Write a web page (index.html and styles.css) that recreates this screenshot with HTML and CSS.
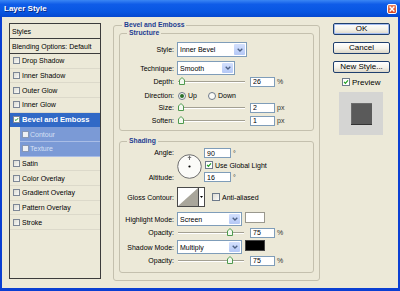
FILE: index.html
```html
<!DOCTYPE html>
<html lang="en">
<head>
    <meta charset="UTF-8">
    <meta name="viewport" content="width=device-width, initial-scale=1.0">
    <title>Layer Style</title>
    <link rel="stylesheet" href="styles.css">
</head>
<body>

<div class="window">
    <div class="titlebar">
        <span class="title">Layer Style</span>
        <span class="close"><svg width="6" height="6" viewBox="0 0 6 6"><path d="M0.6 0.6 L5.4 5.4 M5.4 0.6 L0.6 5.4" stroke="#fff" stroke-width="1.4"/></svg></span>
    </div>

    <div class="content">
        <ul class="styles">
            <li class="head">Styles</li>
            <li class="head">Blending Options: Default</li>
            <li><span class="cb"></span>Drop Shadow</li>
            <li><span class="cb"></span>Inner Shadow</li>
            <li><span class="cb"></span>Outer Glow</li>
            <li><span class="cb"></span>Inner Glow</li>
            <li class="selected"><span class="cb on"><svg viewBox="0 0 7 7"><path d="M1.2 3.4 L2.8 5 L5.8 1.6" stroke="#21a121" stroke-width="1.4" fill="none"/></svg></span>Bevel and Emboss</li>
            <li class="sub"><span class="cb"></span>Contour</li>
            <li class="sub"><span class="cb"></span>Texture</li>
            <li><span class="cb"></span>Satin</li>
            <li><span class="cb"></span>Color Overlay</li>
            <li><span class="cb"></span>Gradient Overlay</li>
            <li><span class="cb"></span>Pattern Overlay</li>
            <li><span class="cb"></span>Stroke</li>
        </ul>

        <fieldset class="group effect">
            <legend>Bevel and Emboss</legend>

            <fieldset class="group structure">
                <legend>Structure</legend>
                <div class="row r-style">
                    <label>Style:</label>
                    <div class="combo w-style"><span>Inner Bevel</span><span class="drop"><svg width="6" height="4" viewBox="0 0 6 4"><path d="M0.7 0.7 L3 3 L5.3 0.7" stroke="#4d6185" stroke-width="1.3" fill="none"/></svg></span></div>
                </div>
                <div class="row r-tech">
                    <label>Technique:</label>
                    <div class="combo w-tech"><span>Smooth</span><span class="drop"><svg width="6" height="4" viewBox="0 0 6 4"><path d="M0.7 0.7 L3 3 L5.3 0.7" stroke="#4d6185" stroke-width="1.3" fill="none"/></svg></span></div>
                </div>
                <div class="row r-slide">
                    <label>Depth:</label>
                    <div class="slider"><span class="thumb" style="left:2px"><svg width="6" height="8" viewBox="0 0 6 8"><path d="M0.5 7.5 V3 L3 0.5 L5.5 3 V7.5 Z" fill="#f3f8ef" stroke="#4f9a4f"/></svg></span></div>
                    <input class="num" type="text" value="26"><span class="unit">%</span>
                </div>
                <div class="row r-dir">
                    <label>Direction:</label>
                    <span class="radio on"></span><span class="opt">Up</span>
                    <span class="radio"></span><span>Down</span>
                </div>
                <div class="row r-slide">
                    <label>Size:</label>
                    <div class="slider"><span class="thumb" style="left:1px"><svg width="6" height="8" viewBox="0 0 6 8"><path d="M0.5 7.5 V3 L3 0.5 L5.5 3 V7.5 Z" fill="#f3f8ef" stroke="#4f9a4f"/></svg></span></div>
                    <input class="num" type="text" value="2"><span class="unit">px</span>
                </div>
                <div class="row r-soften">
                    <label>Soften:</label>
                    <div class="slider"><span class="thumb" style="left:1px"><svg width="6" height="8" viewBox="0 0 6 8"><path d="M0.5 7.5 V3 L3 0.5 L5.5 3 V7.5 Z" fill="#f3f8ef" stroke="#4f9a4f"/></svg></span></div>
                    <input class="num" type="text" value="1"><span class="unit">px</span>
                </div>
            </fieldset>

            <fieldset class="group shading">
                <legend>Shading</legend>
                <div class="angle-block">
                    <div class="angle-labels">
                        <label>Angle:</label>
                        <label>Altitude:</label>
                    </div>
                    <svg class="dial" width="25" height="25" viewBox="0 0 25 25">
                        <circle cx="12.5" cy="12.5" r="11.8" fill="#fbfbf8" stroke="#6f6f6f"/>
                        <path d="M12.5 1.5 V6 M10.8 3.4 H14.2" stroke="#666" stroke-width="0.9"/>
                        <circle cx="12.5" cy="12.5" r="1.1" fill="#000"/>
                    </svg>
                    <div class="angle-fields">
                        <div class="field"><input class="num deg" type="text" value="90"><span class="unit">°</span></div>
                        <div class="field"><span class="check on"><svg viewBox="0 0 7 7"><path d="M1.2 3.4 L2.8 5 L5.8 1.6" stroke="#21a121" stroke-width="1.4" fill="none"/></svg></span>Use Global Light</div>
                        <div class="field"><input class="num deg" type="text" value="16"><span class="unit">°</span></div>
                    </div>
                </div>
                <div class="row r-gloss">
                    <label>Gloss Contour:</label>
                    <svg class="contour" width="28" height="20" viewBox="0 0 28 20">
                        <rect x="0.5" y="0.5" width="27" height="19" fill="#fff" stroke="#4a4a4a"/>
                        <polygon points="1,19 21,1 21,19" fill="#a9a69b"/>
                        <path d="M21.5 1 V19" stroke="#4a4a4a"/>
                        <polygon points="23,9 26,9 24.5,11" fill="#000"/>
                    </svg>
                    <span class="check"></span><span>Anti-aliased</span>
                </div>
                <div class="row r-mode">
                    <label>Highlight Mode:</label>
                    <div class="combo w-mode"><span>Screen</span><span class="drop"><svg width="6" height="4" viewBox="0 0 6 4"><path d="M0.7 0.7 L3 3 L5.3 0.7" stroke="#4d6185" stroke-width="1.3" fill="none"/></svg></span></div>
                    <span class="swatch white"></span>
                </div>
                <div class="row r-op">
                    <label>Opacity:</label>
                    <div class="slider short"><span class="thumb" style="left:50px"><svg width="6" height="8" viewBox="0 0 6 8"><path d="M0.5 7.5 V3 L3 0.5 L5.5 3 V7.5 Z" fill="#f3f8ef" stroke="#4f9a4f"/></svg></span></div>
                    <input class="num" type="text" value="75"><span class="unit">%</span>
                </div>
                <div class="row r-mode2">
                    <label>Shadow Mode:</label>
                    <div class="combo w-mode"><span>Multiply</span><span class="drop"><svg width="6" height="4" viewBox="0 0 6 4"><path d="M0.7 0.7 L3 3 L5.3 0.7" stroke="#4d6185" stroke-width="1.3" fill="none"/></svg></span></div>
                    <span class="swatch black"></span>
                </div>
                <div class="row r-op">
                    <label>Opacity:</label>
                    <div class="slider short"><span class="thumb" style="left:50px"><svg width="6" height="8" viewBox="0 0 6 8"><path d="M0.5 7.5 V3 L3 0.5 L5.5 3 V7.5 Z" fill="#f3f8ef" stroke="#4f9a4f"/></svg></span></div>
                    <input class="num" type="text" value="75"><span class="unit">%</span>
                </div>
            </fieldset>
        </fieldset>

        <div class="actions">
            <button class="btn default">OK</button>
            <button class="btn">Cancel</button>
            <button class="btn">New Style...</button>
            <div class="preview-toggle"><span class="check on"><svg viewBox="0 0 7 7"><path d="M1.2 3.4 L2.8 5 L5.8 1.6" stroke="#21a121" stroke-width="1.4" fill="none"/></svg></span>Preview</div>
            <div class="preview"><div class="preview-swatch"></div></div>
        </div>
    </div>
</div>

</body>
</html>
```

FILE: styles.css
```css
* {
    box-sizing: border-box;
}
html, body {
    margin: 0;
    padding: 0;
}
body {
    font-family: "Liberation Sans", Arial, sans-serif;
    font-size: 7px;
    color: #000;
    background-color: #ece9d8;
}
.window {
    width: 400px;
    height: 291px;
    display: flex;
    flex-direction: column;
    background-color: #ece9d8;
    border: solid #0b3fd2;
    border-width: 0 2px 3px 2px;
}
.titlebar {
    height: 17px;
    flex: none;
    display: flex;
    align-items: center;
    justify-content: space-between;
    margin: 0 -2px;
    padding: 0 3px 0 4px;
    background: linear-gradient(#3a86f4, #0f5ce8 25%, #0756e2 70%, #0448cf);
}
.title {
    color: #fff;
    font-weight: bold;
    font-size: 8px;
    text-shadow: 1px 1px #0b2a86;
}
.close {
    width: 10px;
    height: 10px;
    display: flex;
    align-items: center;
    justify-content: center;
    border: 1px solid #fff;
    border-radius: 2px;
    background: linear-gradient(#e8805c, #d9441f);
}

.content {
    flex: 1;
    display: flex;
    align-items: flex-start;
    padding: 6px 0 0 7px;
}

/* styles list */
.styles {
    list-style: none;
    margin: 0;
    padding: 0;
    width: 92px;
    height: 256px;
    border: 1px solid #3c3c3c;
    background-color: #ece9d8;
    flex: none;
}
.styles li {
    height: 14.67px;
    display: flex;
    align-items: center;
    padding-left: 3px;
    border-bottom: 1px solid #dcd9ca;
    white-space: nowrap;
}
.styles li.head {
    height: 15px;
    padding-left: 2px;
    border-bottom: 1px solid #3c3c3c;
}
.styles li.selected {
    background-color: #3169c6;
    color: #fff;
    font-weight: bold;
    font-size: 7.6px;
    border-bottom-color: #3169c6;
}
.styles li.sub {
    margin-left: 10px;
    padding-left: 2px;
    background-color: #7b9ad6;
    color: #d6e0f5;
    border-bottom-color: #a9bde6;
}
.cb {
    width: 7px;
    height: 7px;
    margin-right: 2px;
    border: 1px solid #7d8796;
    background: linear-gradient(135deg, #dcdcd4, #fafaf8);
    flex: none;
    display: flex;
}
.cb.on {
    background: #fff;
}
.cb svg, .check svg {
    width: 100%;
    height: 100%;
}
.sub .cb {
    background: #eef0f4;
    border-color: #8797b4;
    margin-right: 1px;
}

/* group boxes */
.group {
    margin: 0;
    padding: 0;
    min-width: 0;
    border: 1px solid #c4c0ae;
    border-radius: 3px;
}
.group > legend {
    padding: 0 2px;
    font-weight: bold;
    font-size: 6.8px;
    line-height: 8px;
    color: #1d3d92;
}
.effect {
    width: 207px;
    height: 260px;
    margin: -2px 0 0 12px;
    padding: 0 5px;
    flex: none;
}
.effect > legend {
    margin-left: 3px;
}
.structure {
    height: 102px;
}
.structure > legend, .shading > legend {
    margin-left: 7px;
}
.shading {
    height: 136px;
    margin-top: 6px;
}

.row {
    display: flex;
    align-items: center;
    height: 11px;
    white-space: nowrap;
}
.row label, .angle-labels label {
    width: 54px;
    margin-right: 3px;
    text-align: right;
    flex: none;
}
.r-style {
    height: 15px;
    margin-top: 5px;
}
.r-tech {
    height: 14px;
    margin-top: 4px;
}
.r-slide {
    margin-top: 1px;
}
.r-dir {
    margin-top: 3px;
}
.r-soften {
    margin-top: 2px;
}

.combo {
    height: 100%;
    display: flex;
    align-items: center;
    justify-content: space-between;
    border: 1px solid #7f9db9;
    background-color: #fff;
    padding: 1px 1px 1px 2px;
}
.combo .drop {
    width: 11px;
    height: 100%;
    display: flex;
    align-items: center;
    justify-content: center;
    border-radius: 1px;
    background: linear-gradient(#d3e0fd, #b4c8f6);
}
.w-style {
    width: 70px;
}
.w-tech {
    width: 58px;
}
.w-mode {
    width: 65px;
}

.slider {
    position: relative;
    width: 68px;
    height: 9px;
    margin-right: 5px;
    flex: none;
}
.slider.short {
    width: 67px;
    margin-right: 6px;
}
.slider::before {
    content: "";
    position: absolute;
    left: 1px;
    right: 0;
    top: 4px;
    border-top: 1px solid #a3a092;
    border-bottom: 1px solid #fff;
}
.thumb {
    position: absolute;
    top: 0;
    width: 6px;
    height: 8px;
    display: flex;
}

.num {
    width: 25px;
    height: 10px;
    margin: 0 2px 0 0;
    padding: 0 0 0 2px;
    border: 1px solid #7f9db9;
    background-color: #fff;
    font: 7px "Liberation Sans", Arial, sans-serif;
    color: #000;
    outline: none;
}
.num.deg {
    width: 27px;
}
.unit {
    color: #333;
}

.radio {
    width: 8px;
    height: 8px;
    margin: 0 2px 0 1px;
    border: 1px solid #6e7a8a;
    border-radius: 50%;
    background-color: #fafaf6;
    display: flex;
    align-items: center;
    justify-content: center;
    flex: none;
}
.radio.on::after {
    content: "";
    width: 4px;
    height: 4px;
    border-radius: 50%;
    background-color: #2a6f2a;
}
.opt {
    margin-right: 10px;
}

.check {
    width: 8px;
    height: 8px;
    margin-right: 2px;
    border: 1px solid #6e7a8a;
    background: linear-gradient(135deg, #dddcd4, #fbfbf9);
    display: flex;
    flex: none;
}
.check.on {
    background: #fff;
}

/* shading */
.angle-block {
    display: flex;
    height: 34px;
    margin-top: 3px;
}
.angle-labels {
    display: flex;
    flex-direction: column;
    justify-content: space-between;
    line-height: 9px;
}
.angle-labels label {
    display: block;
}
.dial {
    margin-top: 6px;
    flex: none;
}
.angle-fields {
    display: flex;
    flex-direction: column;
    justify-content: space-between;
    margin-left: 2px;
}
.field {
    display: flex;
    align-items: center;
    height: 10px;
    white-space: nowrap;
}
.field .check {
    margin-left: 1px;
}
.r-gloss {
    height: 20px;
    margin-top: 5px;
}
.contour {
    flex: none;
    margin-right: 7px;
}
.r-mode, .r-mode2 {
    height: 14px;
    align-items: flex-start;
}
.r-mode {
    margin-top: 5px;
}
.r-mode2 {
    margin-top: 2px;
}
.r-mode label, .r-mode2 label {
    align-self: center;
}
.r-op {
    margin-top: 1px;
}
.swatch {
    width: 20px;
    height: 11px;
    margin-left: 3px;
}
.swatch.white {
    background-color: #fff;
    border: 1px solid #9a988e;
}
.swatch.black {
    background-color: #000;
    border: 1px solid #444;
}

/* right column */
.actions {
    width: 57px;
    margin-left: 13px;
    flex: none;
    display: flex;
    flex-direction: column;
}
.btn {
    height: 12px;
    width: 57px;
    margin: 0 0 7px 0;
    padding: 0;
    border: 1px solid #1f3f6e;
    border-radius: 2px;
    background: linear-gradient(#ffffff, #f4f2ea 55%, #dcd7c8);
    font: 8px "Liberation Sans", Arial, sans-serif;
    color: #000;
    line-height: 10px;
}
.btn.default {
    box-shadow: inset 0 0 0 1px #a4bdf0;
}
.preview-toggle {
    display: flex;
    align-items: center;
    height: 8px;
    margin-top: -2px;
    padding-left: 9px;
    font-size: 8px;
}
.preview {
    width: 44px;
    height: 43px;
    margin: 6px 0 0 6px;
    padding: 11px 0 0 12px;
    background-color: #d5d5d3;
}
.preview-swatch {
    width: 21px;
    height: 22px;
    background-color: #5a5a5a;
    box-shadow: inset 0 -1px #333, inset 1px 1px #6c6c6c;
}
```
